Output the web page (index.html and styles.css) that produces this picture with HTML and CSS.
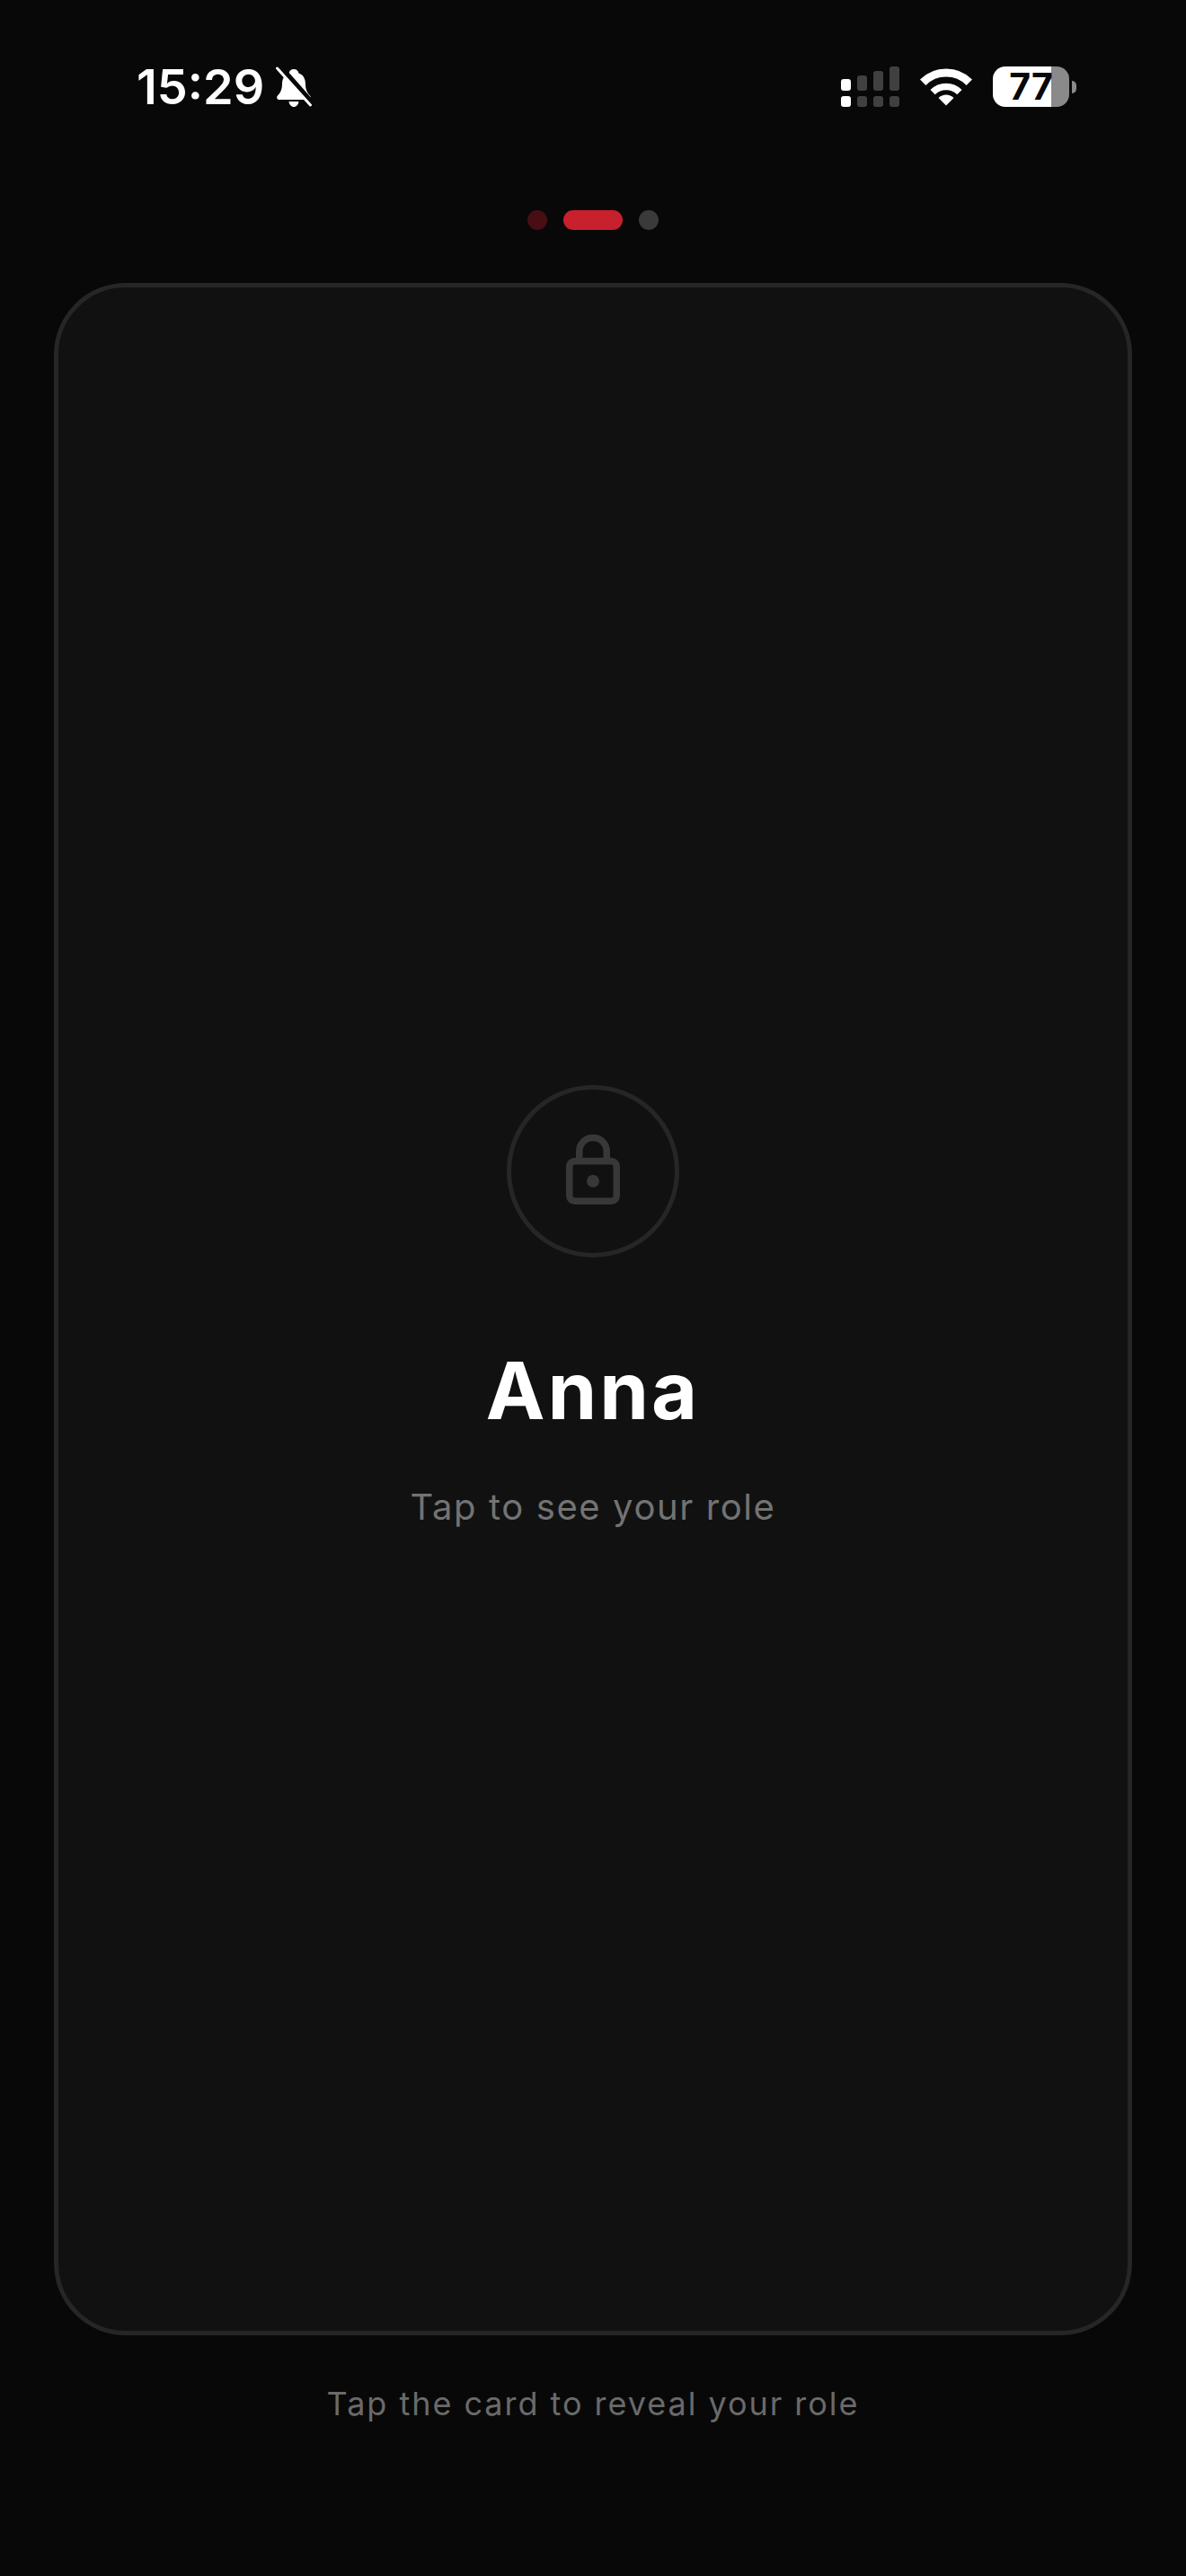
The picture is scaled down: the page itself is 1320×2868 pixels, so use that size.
FILE: index.html
```html
<!DOCTYPE html>
<html lang="en">
<head>
<meta charset="utf-8">
<title>Role reveal</title>
<link rel="stylesheet" href="styles.css">
</head>
<body>
<div class="screen">
  <header class="status">
    <div class="status-left">
      <span class="time">15:29</span>
      <svg class="bell" viewBox="0 0 41 46" width="41" height="46" fill="none">
        <path d="M20 3c-3 0-5 2-5.500 4.500C8.500 9.500 7 15 7 20c0 5-1.500 9-5 12.500C.5 34 1.200 37 3.500 37h33c2.300 0 3-3 1.500-4.500-3.500-3.500-5-7.500-5-12.500 0-5-1.500-10.500-7.500-12.500C25 5 23 3 20 3z" fill="#fff"/>
        <path d="M14.500 39h11c-.4 3.500-2.700 6-5.500 6s-5.100-2.500-5.500-6z" fill="#fff"/>
        <path d="M3 -1l37 42" stroke="#080808" stroke-width="7"/>
        <path d="M1.500 2l37 41" stroke="#fff" stroke-width="3" stroke-linecap="round"/>
      </svg>
    </div>
    <div class="status-right">
      <svg class="signal" viewBox="0 0 65 45" width="65" height="45">
        <rect x="0" y="14" width="11" height="13" rx="3" fill="#fff"/><rect x="0" y="33" width="11" height="12" rx="3" fill="#fff"/>
        <rect x="18" y="10" width="11" height="17" rx="3" fill="#404040"/><rect x="18" y="33" width="11" height="12" rx="3" fill="#404040"/>
        <rect x="36" y="5" width="11" height="22" rx="3" fill="#404040"/><rect x="36" y="33" width="11" height="12" rx="3" fill="#404040"/>
        <rect x="54" y="0" width="11" height="27" rx="3" fill="#404040"/><rect x="54" y="33" width="11" height="12" rx="3" fill="#404040"/>
      </svg>
      <svg class="wifi" viewBox="0 0 58 42" width="58" height="42" fill="none" stroke="#fff">
        <path d="M3.200 15.800a36.500 36.500 0 0 1 51.600 0" stroke-width="9"/>
        <path d="M14.100 26.700a21 21 0 0 1 29.800 0" stroke-width="7.500"/>
        <path d="M29 41.500L20.500 33a12 12 0 0 1 17 0z" fill="#fff" stroke="none"/>
      </svg>
      <div class="battery">
        <div class="batt-body"><span class="batt-num">77</span></div>
        <span class="batt-tip"></span>
      </div>
    </div>
  </header>

  <div class="dots">
    <span class="dot dot-red"></span>
    <span class="pill"></span>
    <span class="dot dot-grey"></span>
  </div>

  <main class="card">
    <div class="lock-ring">
      <svg class="lock" viewBox="0 0 60 78" width="60" height="78" fill="none" stroke="#383838" stroke-width="7.500">
        <path d="M14.750 30V18.750a15.250 15 0 0 1 30.500 0V30"/>
        <rect x="3.750" y="29.750" width="52.500" height="44.500" rx="6"/>
        <circle cx="30" cy="52" r="7" fill="#383838" stroke="none"/>
      </svg>
    </div>
    <h1 class="name">Anna</h1>
    <p class="hint">Tap to see your role</p>
  </main>

  <p class="footer">Tap the card to reveal your role</p>
</div>
</body>
</html>
```
FILE: styles.css
```css
* { box-sizing: border-box; }
html, body { margin: 0; background: #080808; }
body { font-family: Inter, "Liberation Sans", sans-serif; color: #fff; }
.screen { width: 1320px; height: 2868px; display: flex; flex-direction: column; align-items: center; overflow: hidden; }
.status { width: 100%; height: 234px; padding: 74px 122px 0 152px; display: flex; justify-content: space-between; align-items: flex-start; flex: none; }
.status-left { display: flex; align-items: center; gap: 13px; height: 46px; }
.time { font-size: 54px; font-weight: 600; line-height: 46px; }
.status-right { display: flex; align-items: center; gap: 23px; height: 45px; }
.battery { display: flex; align-items: center; gap: 3px; }
.batt-body { width: 85px; height: 45px; border-radius: 14px; background: linear-gradient(90deg, #fff 0 65px, #8a8a8a 65px 100%); display: flex; align-items: center; justify-content: center; }
.batt-num { color: #080808; font-size: 41px; font-weight: 700; line-height: 45px; }
.batt-tip { width: 5px; height: 14px; border-radius: 0 5px 5px 0; background: #8a8a8a; }
.dots { height: 22px; display: flex; align-items: center; gap: 18px; flex: none; }
.dot { width: 22px; height: 22px; border-radius: 50%; }
.dot-red { background: #470f14; }
.dot-grey { background: #3a3a3a; }
.pill { width: 66px; height: 22px; border-radius: 11px; background: #c8202d; }
.card { width: 1200px; height: 2285px; margin-top: 59px; padding-bottom: 5px; background: #111; border: 5px solid #262626; border-radius: 80px; display: flex; flex-direction: column; align-items: center; justify-content: center; flex: none; }
.lock-ring { width: 192px; height: 192px; border: 5px solid #262626; border-radius: 50%; display: flex; align-items: center; justify-content: center; flex: none; }
.lock { margin-bottom: 4px; }
.name { margin: 95px 0 0; font-size: 88px; line-height: 106px; font-weight: 700; letter-spacing: 3px; }
.hint { margin: 53px 0 0; font-size: 40px; line-height: 48px; color: #737373; letter-spacing: 1.6px; }
.footer { margin: 54px 0 0; font-size: 36px; line-height: 44px; color: #6a6a6a; letter-spacing: 1.96px; }
```
